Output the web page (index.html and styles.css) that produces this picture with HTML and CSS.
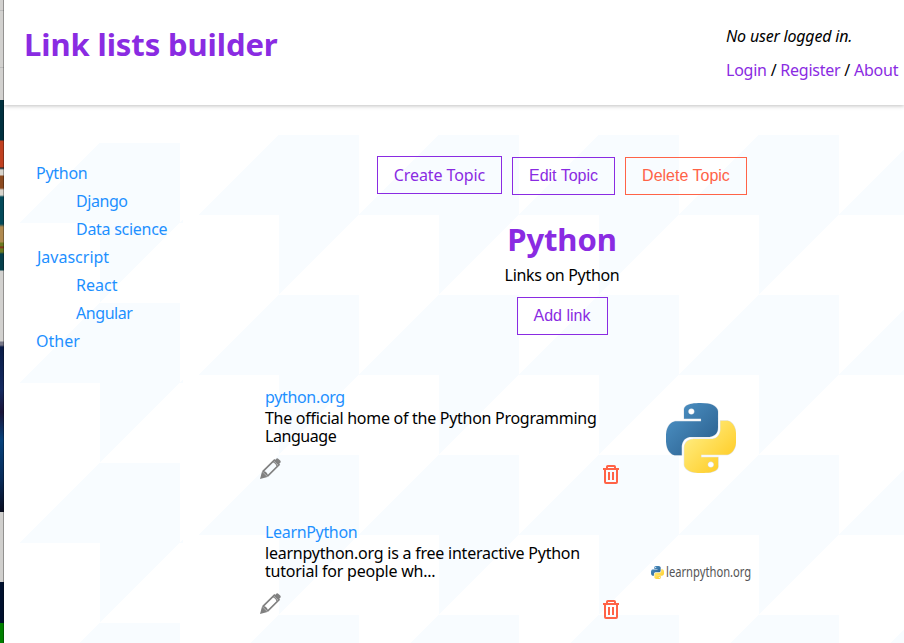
FILE: index.html
```html
<!DOCTYPE html>
<html lang="en">
<head>
<meta charset="utf-8">
<title>Link lists builder</title>
<link rel="stylesheet" href="styles.css">
</head>
<body>
<svg class="defs" aria-hidden="true">
  <defs>
    <linearGradient id="blue" x1="0" y1="0" x2="1" y2="1"><stop offset="0" stop-color="#5097cb"/><stop offset=".8" stop-color="#2f6695"/></linearGradient>
    <linearGradient id="yellow" x1="0" y1="0" x2="1" y2="1"><stop offset=".25" stop-color="#ffe873"/><stop offset=".75" stop-color="#ffd133"/></linearGradient>
    <symbol id="snake" viewBox="0 0 24 24">
      <circle cx="8.7" cy="3" r="1.5" fill="#fff"/><circle cx="15.3" cy="21" r="1.5" fill="#fff"/>
      <g stroke="#dfe3e8" stroke-width=".35" paint-order="stroke">
      <path fill="url(#blue)" d="M14.25.18l.9.2.73.26.59.3.45.32.34.34.25.34.16.33.1.3.04.26.02.2-.01.13V8.5l-.05.63-.13.55-.21.46-.26.38-.3.31-.33.25-.35.19-.35.14-.33.1-.3.07-.26.04-.21.02H8.77l-.69.05-.59.14-.5.22-.41.27-.33.32-.27.35-.2.36-.15.37-.1.35-.07.32-.04.27-.02.21v3.06H3.17l-.21-.03-.28-.07-.32-.12-.35-.18-.36-.26-.36-.36-.35-.46-.32-.59-.28-.73-.21-.88-.14-1.05-.05-1.23.06-1.22.16-1.04.24-.87.32-.71.36-.57.4-.44.42-.33.42-.24.4-.16.36-.1.32-.05.24-.01h.16l.06.01h8.16v-.83H6.18l-.01-2.75-.02-.37.05-.34.11-.31.17-.28.25-.26.31-.23.38-.2.44-.18.51-.15.58-.12.64-.1.71-.06.77-.04.84-.02 1.27.05zm-6.3 1.98l-.23.33-.08.41.08.41.23.34.33.22.41.09.41-.09.33-.22.23-.34.08-.41-.08-.41-.23-.33-.33-.22-.41-.09-.41.09z"/>
      <path fill="url(#yellow)" d="M21.1 6.11l.28.06.32.12.35.18.36.27.36.35.35.47.32.59.28.73.21.88.14 1.04.05 1.23-.06 1.23-.16 1.04-.24.86-.32.71-.36.57-.4.45-.42.33-.42.24-.4.16-.36.09-.32.05-.24.02-.16-.01h-8.22v.82h5.84l.01 2.76.02.36-.05.34-.11.31-.17.29-.25.25-.31.24-.38.2-.44.17-.51.15-.58.13-.64.09-.71.07-.77.04-.84.01-1.27-.04-1.07-.14-.9-.2-.73-.25-.59-.3-.45-.33-.34-.34-.25-.34-.16-.33-.1-.3-.04-.25-.02-.2.01-.13v-5.34l.05-.64.13-.54.21-.46.26-.38.3-.32.33-.24.35-.2.35-.14.33-.1.3-.06.26-.04.21-.02.13-.01h5.84l.69-.05.59-.14.5-.21.41-.28.33-.32.27-.35.2-.36.15-.36.1-.35.07-.32.04-.28.02-.21V6.07h2.09l.14.01zm-6.47 14.25l-.23.33-.08.41.08.41.23.33.33.23.41.08.41-.08.33-.23.23-.33.08-.41-.08-.41-.23-.33-.33-.23-.41-.08-.41.08z"/>
      </g>
    </symbol>
    <symbol id="pencil" viewBox="0 0 21 21">
      <path fill="#808080" d="M0 21 L2 13.5 L7.5 19 Z"/>
      <path fill="none" stroke="#808080" stroke-width="1.7" d="M3.2 13.2 L14.3 2.1 L19 6.8 L7.9 17.9 Z"/>
      <path fill="none" stroke="#808080" stroke-width="1.1" d="M5 14 L7 16 M13 3.8 L14.6 4.6 L16.2 6.2 L17 8"/>
      <path fill="#808080" d="M14.6 2.4 L16.3 .7 Q17.3 -.2 18.5 .9 L20.2 2.6 Q21.2 3.7 20.3 4.7 L18.6 6.4 Z"/>
    </symbol>
    <symbol id="trash" viewBox="0 0 16 19">
      <path fill="none" stroke="tomato" stroke-width="2" stroke-linejoin="round" d="M2 3.5 V17 Q2 18 3 18 H13 Q14 18 14 17 V3.5 M4 3.5 V1.8 Q4 1 4.8 1 H11.2 Q12 1 12 1.8 V3.5 M0 4 H16 M6 7 V15 M10 7 V15"/>
    </symbol>
  </defs>
</svg>
<div class="desktop"></div>
<div class="page">
  <header class="header">
    <h1 class="brand">Link lists builder</h1>
    <div class="account">
      <em class="status">No user logged in.</em>
      <nav class="account-links"><a href="#">Login</a> / <a href="#">Register</a> / <a href="#">About</a></nav>
    </div>
  </header>
  <div class="content">
    <aside class="sidebar pattern">
      <ul>
        <li><a class="snug" href="#">Python</a>
          <ul><li><a class="tight" href="#">Django</a></li><li><a class="snug" href="#">Data science</a></li></ul></li>
        <li><a class="hooked" href="#">Javascript</a>
          <ul><li><a href="#">React</a></li><li><a class="tight" href="#">Angular</a></li></ul></li>
        <li><a href="#">Other</a></li>
      </ul>
    </aside>
    <main class="main pattern">
      <div class="actions">
        <a class="btn create" href="#">Create Topic</a>
        <button class="btn edit">Edit Topic</button>
        <button class="btn delete">Delete Topic</button>
      </div>
      <h2 class="topic">Python</h2>
      <p class="summary">Links on Python</p>
      <button class="btn add">Add link</button>
      <section class="links">
        <article class="link">
          <div class="link-body">
            <a class="link-title" href="#">python.org</a>
            <p class="snug">The official home of the Python Programming<br><span class="tight">Language</span></p>
            <div class="tools"><svg class="pencil"><use href="#pencil"/></svg><svg class="trash"><use href="#trash"/></svg></div>
          </div>
          <div class="thumb"><svg class="logo"><use href="#snake"/></svg></div>
        </article>
        <article class="link">
          <div class="link-body">
            <a class="link-title" href="#">LearnPython</a>
            <p class="close">learnpython.org is a free interactive Python<br>tutorial for people wh...</p>
            <div class="tools"><svg class="pencil"><use href="#pencil"/></svg><svg class="trash"><use href="#trash"/></svg></div>
          </div>
          <div class="thumb wordmark"><svg class="logo-small"><use href="#snake"/></svg><span>learnpython.org</span></div>
        </article>
      </section>
    </main>
  </div>
</div>
</body>
</html>
```
FILE: styles.css
```css
* { box-sizing: border-box; }
body {
  margin: 0;
  display: flex;
  height: 643px;
  overflow: hidden;
  background: #fff;
  color: #000;
  font: 16px/18px "Noto Sans", sans-serif;
}
h1, h2, p, ul { margin: 0; padding: 0; }
ul { list-style: none; }
a { color: dodgerblue; text-decoration: none; }
.close { letter-spacing: -.23px; }
.snug { letter-spacing: -.28px; }
.tight { letter-spacing: -.43px; }
.hooked { padding-left: 1px; }
.defs { position: absolute; width: 0; height: 0; }
.desktop {
  flex: 0 0 4px;
  background:
    linear-gradient(90deg, transparent 3px, rgba(0,0,0,.3) 3px),
    linear-gradient(#d2d1cf 10px, #bbb 10px 11px, #d2d1cf 11px 67px, #bbb 67px 68px, #d2d1cf 68px 100px,
      #01313f 100px 140px, #c04020 141px 167px, #10202a 168px, #d8d4cc 170px 175px, #8c4a20 176px 188px,
      #d8d4cc 190px 195px, #044a5a 197px 224px, #b08a50 227px 242px, #6b7a20 243px 246px, #8a2018 247px, #6b7a20 249px 252px,
      #06404c 254px 270px, #d2d1cf 271px 341px, #778 342px 345px, #0a1c48 347px, #142a60 390px, #1a1438 412px,
      #06427c 440px, #082a58 480px, #0a0e20 512px, #d0cfcd 512px 582px, #00102e 582px 623px, #008000 623px);
}
.page { flex: 1; min-width: 0; overflow: hidden; }
.header {
  display: flex;
  justify-content: space-between;
  height: 105px;
  padding: 26px 5px 0 20px;
  box-shadow: 0 1px 4px rgba(0,0,0,.25);
}
.brand, .topic { color: blueviolet; font-weight: 700; font-size: 31px; line-height: 37px; letter-spacing: -.1px; }
.account { width: 173px; }
.status { display: block; line-height: 20px; letter-spacing: -.2px; }
.account-links { margin-top: 15px; line-height: 18px; white-space: nowrap; letter-spacing: -.24px; }
.account-links a { color: blueviolet; }
.content { display: flex; }
.pattern {
  background:
    conic-gradient(transparent 50%, #fff 50% 75%, transparent 75%) 0 0 / 160px 160px,
    linear-gradient(135deg, #fff 25%, #f8fcff 25% 75%, #fff 75%) 0 0 / 160px 160px;
}
.sidebar { flex: 0 0 163px; min-width: 0; height: 500px; margin: 38px 16px 0 16px; padding: 16px 0 16px 16px; line-height: 28px; white-space: nowrap; }
.sidebar ul ul { padding-left: 40px; }
.main { flex: 0 0 726px; height: 508px; margin-top: 30px; padding-top: 21px; text-align: center; }
.actions { display: flex; justify-content: center; gap: 10px; height: 38px; }
.btn {
  display: block;
  height: 38px;
  padding: 0;
  border: 1px solid blueviolet;
  background: none;
  color: blueviolet;
  font: 16px/36px "Liberation Sans", sans-serif;
}
.create { width: 125px; font-family: "Noto Sans", sans-serif; letter-spacing: -.1px; }
.edit { width: 103px; margin-top: 1px; line-height: 34px; }
.delete { width: 122px; margin-top: 1px; border-color: tomato; color: tomato; line-height: 34px; }
.topic { margin-top: 27px; }
.summary { margin-top: 8px; letter-spacing: -.32px; }
.add { width: 91px; margin: 13px auto 0; }
.links { padding: 52px 0 0 61px; text-align: left; }
.link { display: flex; height: 135px; }
.link-body { width: 359px; padding-left: 5px; white-space: nowrap; }
.link-title { display: block; line-height: 20px; margin-bottom: 2px; letter-spacing: -.33px; }
.tools { display: flex; justify-content: space-between; margin-left: -5px; padding-top: 13px; }
.pencil { width: 21px; height: 21px; }
.trash { width: 16px; height: 19px; margin-top: 7px; }
.thumb { display: flex; align-items: center; justify-content: center; width: 100px; height: 100px; margin: 1px 0 0 32px; }
.logo { width: 70px; height: 70px; }
.wordmark { justify-content: flex-start; gap: 2px; margin-top: 0; color: #555; font-size: 14px; white-space: nowrap; }
.wordmark span { transform: scaleX(.8); transform-origin: 0 50%; }
.logo-small { flex: none; width: 13px; height: 13px; }
```
